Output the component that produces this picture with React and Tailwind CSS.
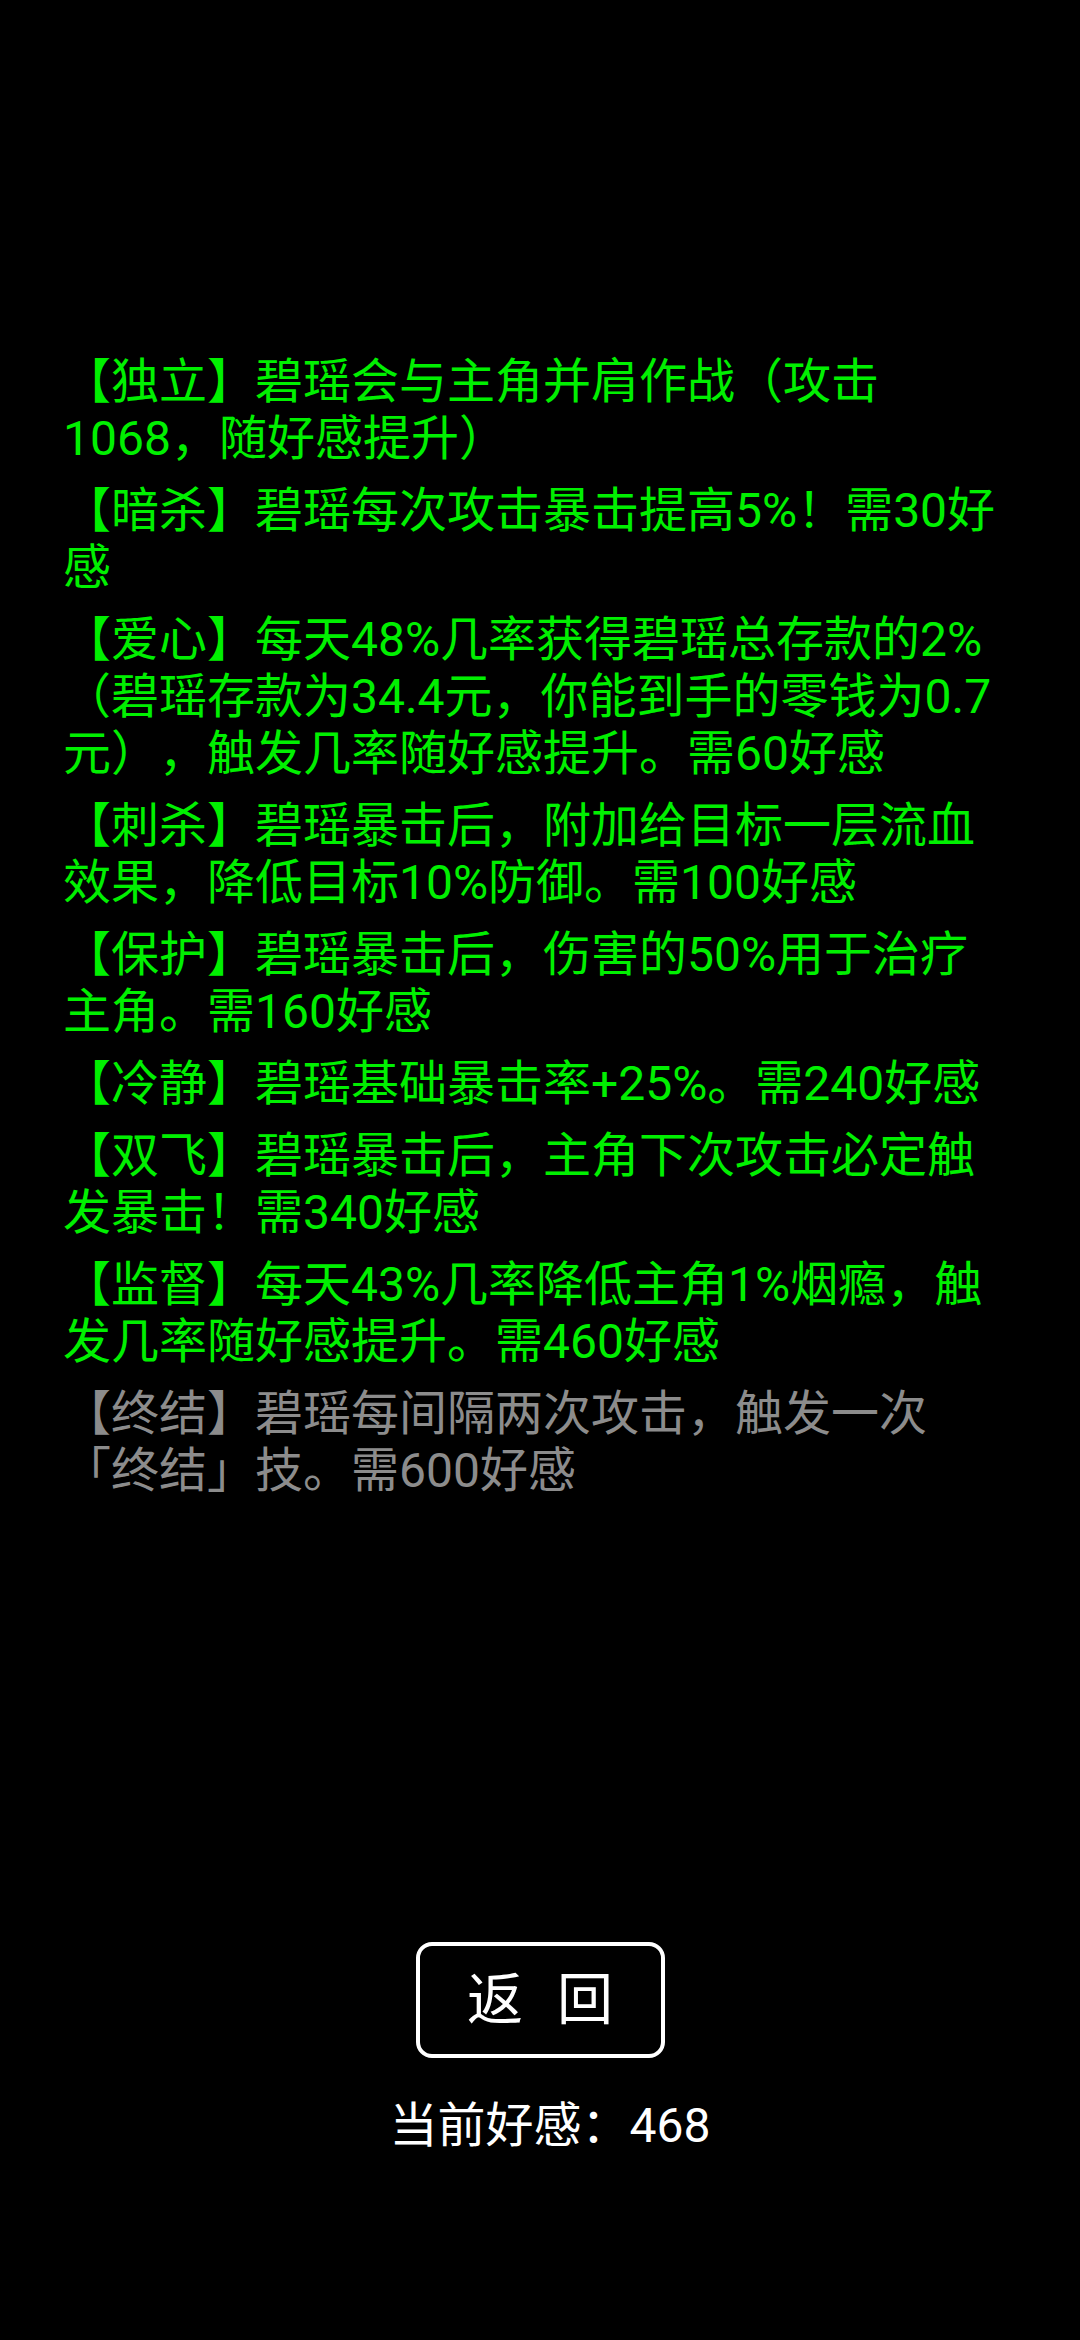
import React from "react";

const items = [
  { c: "g", lines: ["【独立】碧瑶会与主角并肩作战（攻击", "1068，随好感提升）"] },
  { c: "g", lines: ["【暗杀】碧瑶每次攻击暴击提高5%！需30好", "感"] },
  { c: "g", lines: ["【爱心】每天48%几率获得碧瑶总存款的2%", "（碧瑶存款为34.4元，你能到手的零钱为0.7", "元），触发几率随好感提升。需60好感"] },
  { c: "g", lines: ["【刺杀】碧瑶暴击后，附加给目标一层流血", "效果，降低目标10%防御。需100好感"] },
  { c: "g", lines: ["【保护】碧瑶暴击后，伤害的50%用于治疗", "主角。需160好感"] },
  { c: "g", lines: ["【冷静】碧瑶基础暴击率+25%。需240好感"] },
  { c: "g", lines: ["【双飞】碧瑶暴击后，主角下次攻击必定触", "发暴击！需340好感"] },
  { c: "g", lines: ["【监督】每天43%几率降低主角1%烟瘾，触", "发几率随好感提升。需460好感"] },
  { c: "x", lines: ["【终结】碧瑶每间隔两次攻击，触发一次", "「终结」技。需600好感"] },
];

export default function App() {
  return (
    <div
      className="flex h-[2340px] w-[1080px] flex-col bg-black [text-spacing-trim:space-all]"
      style={{ fontFamily: 'Roboto, "Noto Sans CJK SC", sans-serif' }}
    >
      <div className="flex flex-col gap-[15px] px-[63px] pt-[353px]">
        {items.map((it, i) => (
          <div
            key={i}
            className={
              "text-[48px] leading-[57px] " +
              (it.c === "g" ? "text-[#00f000]" : "text-[#8c8c8c]")
            }
          >
            {it.lines.map((l, j) => (
              <div key={j} className="whitespace-nowrap">
                {l}
              </div>
            ))}
          </div>
        ))}
      </div>
      <div className="flex-1" />
      <div className="flex flex-col items-center pb-[184px]">
        <div className="flex h-[116px] w-[249px] items-center justify-center gap-[34px] rounded-[16px] border-[4px] border-white text-[56px] leading-none text-white">
          <span>返</span>
          <span>回</span>
        </div>
        <div className="mt-[38px] pl-[20px] text-[48px] leading-[60px] text-white">当前好感：468</div>
      </div>
    </div>
  );
}
